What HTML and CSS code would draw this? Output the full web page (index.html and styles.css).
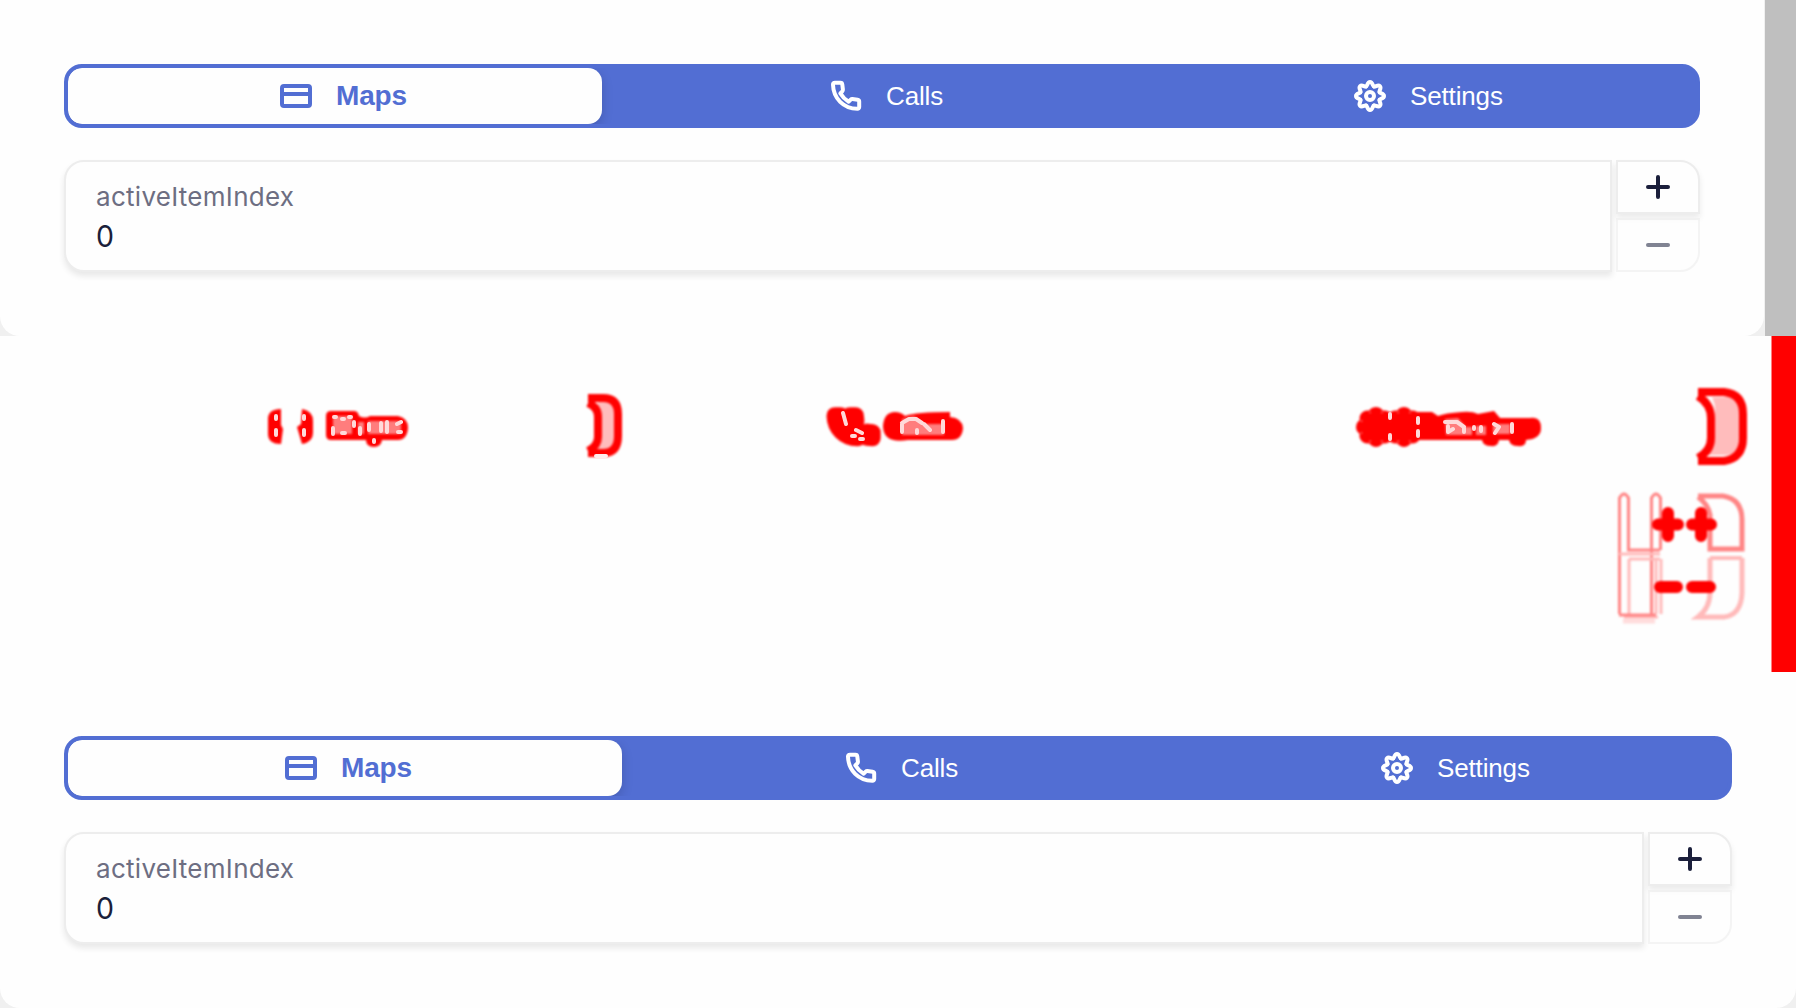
FILE: index.html
```
<!DOCTYPE html>
<html lang="en">
<head>
<meta charset="utf-8">
<title>Tabs comparison</title>
<link rel="stylesheet" href="styles.css">
</head>
<body>
<svg class="defs" width="0" height="0">
  <defs>
    <symbol id="card" viewBox="0 0 32 32"><rect x="2" y="6" width="28" height="20" rx="2"/><path d="M2 14h28"/></symbol>
    <symbol id="phone" viewBox="0 0 32 32"><path id="phone-path" d="M5 2.8h5.5q1.6 0 1.8 1.6l.6 5.2q.1 1-.6 1.7l-2 2C12.3 16.8 15.2 19.7 18.7 21.7l2-2q.7-.7 1.7-.6l5.2.6q1.6.2 1.6 1.8v5.5q0 1.8-1.9 1.7C13.6 28.6 3.4 18.4 3 4.7Q2.9 2.8 5 2.8z"/></symbol>
    <path id="tooth" d="M12.06 6.48C13.6 6 13.2 2 16 2C18.8 2 18.4 6 19.94 6.48"/>
    <g id="gear-shape"><circle cx="16" cy="16" r="4"/><use href="#tooth"/><use href="#tooth" transform="rotate(45 16 16)"/><use href="#tooth" transform="rotate(90 16 16)"/><use href="#tooth" transform="rotate(135 16 16)"/><use href="#tooth" transform="rotate(180 16 16)"/><use href="#tooth" transform="rotate(225 16 16)"/><use href="#tooth" transform="rotate(270 16 16)"/><use href="#tooth" transform="rotate(315 16 16)"/></g>
    <symbol id="gear" viewBox="0 0 32 32"><use href="#gear-shape"/></symbol>
  </defs>
</svg>
<section class="band before">
  <div class="card">
    <nav class="tabs">
      <div class="tab active"><svg class="icon"><use href="#card"/></svg><span>Maps</span></div>
      <div class="tab calls"><svg class="icon"><use href="#phone"/></svg><span>Calls</span></div>
      <div class="tab settings"><svg class="icon"><use href="#gear"/></svg><span>Settings</span></div>
    </nav>
    <div class="control">
      <div class="field"><span class="label">activeItemIndex</span><span class="value">0</span></div>
      <div class="steps">
        <div class="step up"><svg class="sign" viewBox="0 0 24 24"><path d="M12 2v20M2 12h20"/></svg></div>
        <div class="step down"><svg class="sign" viewBox="0 0 24 24"><path d="M2 12h20"/></svg></div>
      </div>
    </div>
  </div>
</section>
<section class="band difference">
  <svg class="marks" viewBox="0 0 1796 336">
    <rect class="solid" x="1771.500" y="0" width="25" height="336"/>
    <g class="soft">
      <path class="solid" d="M281 73Q268 73 268 83V98Q268 108 281 108L283 93L281 89ZM302 73Q313 75 313 85V97Q313 106 302 108L297 91L301 88Z"/>
      <path class="solid" d="M331 75H354Q358 75 359 80Q365 83 370 80H398Q408 82 408 92Q407 104 398 104H382Q381 111 374 111Q366 111 366 104H331Q326 104 326 99V80Q326 75 331 75Z"/>
      <path class="wash" d="M598 65H609Q615 68 615 76V98Q614 112 605 114H598Z"/>
      <path class="line" stroke-width="8" d="M588 67Q598 71 598 81V101Q598 110 588 115M588 62H603Q618 62 618 78V100Q618 117 603 117H588"/>
      <g class="line" stroke-width="13"><use href="#phone-path" x="830" y="75"/><use href="#phone-path" x="845" y="75"/></g>
      <path class="solid" d="M895 76Q901 76 905 80Q916 76 950 76V81Q962 82 963 92Q962 104 952 104H908Q883 108 883 90Q884 76 895 76Z"/>
      <g class="line" stroke-width="12"><use href="#gear-shape" x="1360" y="75"/><use href="#gear-shape" x="1388" y="75"/></g>
      <circle class="solid" cx="1376" cy="91" r="15"/><circle class="solid" cx="1404" cy="91" r="15"/>
      <path class="solid" d="M1415 76H1432L1438 80Q1445 77 1462 76Q1472 75 1478 78L1494 75L1500 82H1530Q1541 80 1541 92Q1541 103 1526 104Q1526 111 1518 110Q1510 110 1509 104H1499Q1498 111 1491 110Q1483 110 1482 104H1415Z"/>
      <path class="blush" d="M333 80H352V98H333ZM358 86H364V98H358ZM368 85H401V98H368ZM902 83L914 80L924 88H944V99H902ZM1445 83L1458 82L1466 91H1472V99H1446ZM1476 90H1486V99H1476ZM1493 88H1510V98H1493Z"/>
      <path class="wash" d="M1712 61Q1715 68 1715 73V97Q1715 109 1707 119H1727Q1739 118 1739 100V77Q1739 61 1725 61Z"/>
      <path class="line" stroke-width="8" d="M1698 60Q1711 68 1711 82V102Q1711 115 1698 122M1698 56H1724Q1743 58 1743 78V102Q1743 122 1724 125H1698"/>
      <g class="pale">
        <path stroke-width="3" d="M1619.500 278V162Q1624 154 1628.500 162V214H1660M1651.500 278V162Q1656 154 1660.500 162V214"/>
        <path class="faint" d="M1619 218H1660M1629 223H1660M1629 223V278M1656 223V278M1661 223V278M1624 281H1658"/>
        <path d="M1619 279H1656"/>
        <path stroke-width="5" d="M1698 160H1723Q1742 163 1742 184V213H1710V179Q1708 168 1698 161"/>
        <path class="faint" stroke-width="5" d="M1742 222V257Q1741 279 1724 281H1698Q1710 272 1710 256V222"/>
        <path class="faint" stroke-width="4" d="M1710 222H1742"/>
        <path class="glow" stroke-width="5" d="M1623 285H1655"/>
      </g>
      <path class="line round" stroke-width="12" d="M1658 188.500H1678M1668 177V200M1692 188.500H1711M1701 177V200M1660 251H1677M1692 251H1710"/>
    </g>
    <path class="flecks" d="M276 80v3M276 94v5M304 80v3M304 94v5M334 81h2M342 83h2M349 81h2M333 92v6M342 97h3M354 86v4M360 92v6M369 88v6M381 87v8M387 86v10M397 88l4-2M398 96h3M374 104v2M843 77l3 11M856 94l6 3M852 100h3M860 103h3M902 87l7-4h7l6 4M902 88v8M917 94v3M924 88l6 6M943 85v11M1390 78v4M1390 99v4M1418 82v5M1418 95v5M1445 86h12l7 5M1448 90v6l5-3M1464 92v4M1474 91v2M1481 91v4M1494 88l5 3-4 6M1512 88v8"/>
    <path class="flecks wide" d="M596 120h10"/>
  </svg>
</section>
<section class="band after">
  <div class="card">
    <nav class="tabs">
      <div class="tab active"><svg class="icon"><use href="#card"/></svg><span>Maps</span></div>
      <div class="tab calls"><svg class="icon"><use href="#phone"/></svg><span>Calls</span></div>
      <div class="tab settings"><svg class="icon"><use href="#gear"/></svg><span>Settings</span></div>
    </nav>
    <div class="control">
      <div class="field"><span class="label">activeItemIndex</span><span class="value">0</span></div>
      <div class="steps">
        <div class="step up"><svg class="sign" viewBox="0 0 24 24"><path d="M12 2v20M2 12h20"/></svg></div>
        <div class="step down"><svg class="sign" viewBox="0 0 24 24"><path d="M2 12h20"/></svg></div>
      </div>
    </div>
  </div>
</section>
</body>
</html>
```
FILE: styles.css
```
* { box-sizing: border-box; }
body { margin: 0; background: #fefefe; font-family: "Liberation Sans", Arial, sans-serif; }
.defs { display: block; }
.band { height: 336px; overflow: hidden; display: flex; }
.before { width: 1796px; background: linear-gradient(90deg, #f0f0f0 1765px, #bfbfbf 1765px); --first: 534px; --second: 568px; --pad1: 212px; --pad2: 228px; --pad3: 184px; }
.after { background: #f0f0f0; --first: 554px; --second: 579px; --pad1: 217px; --pad2: 223px; --pad3: 180px; }
.card { width: 100%; height: 336px; padding: 64px; background: #fefefe; border-radius: 0 0 20px 20px; }
.before .card { width: 1764px; }
.tabs { height: 64px; display: grid; grid-template-columns: var(--first) var(--second) 1fr; border: 4px solid #526ed3; border-radius: 18px; background: #526ed3; overflow: hidden; }
.tab { display: flex; align-items: center; gap: 24px; color: #fff; font-size: 26px; line-height: 56px; letter-spacing: -.15px; white-space: nowrap; }
.active { padding-left: var(--pad1); border-radius: 14px; background: #fefefe; color: #526ed3; font-size: 28px; font-weight: 700; box-shadow: 0 4px 12px rgba(0, 0, 0, .16); }
.calls { padding-left: var(--pad2); }
.settings { padding-left: var(--pad3); }
.icon { flex: none; width: 32px; height: 32px; fill: none; stroke: currentColor; stroke-width: 4; stroke-linecap: round; stroke-linejoin: round; }
.control { display: flex; gap: 4px; height: 112px; margin-top: 32px; }
.field { flex: 1; display: flex; flex-direction: column; padding: 18px 30px; border: 2px solid #ededed; border-radius: 20px 0 0 20px; background: #fefefe; box-shadow: 0 4px 6px rgba(0, 0, 0, .09); font-family: Inter, sans-serif; }
.label { color: #6d6e82; font-size: 26px; line-height: 34px; letter-spacing: .28px; }
.value { color: #1b1f3b; font-size: 30px; line-height: 44px; transform: scaleX(.95); transform-origin: left; }
.steps { width: 84px; display: flex; flex-direction: column; gap: 4px; }
.step { flex: 1; display: flex; align-items: center; justify-content: center; border: 2px solid #ededed; background: #fefefe; }
.up { border-radius: 0 20px 0 0; box-shadow: 0 4px 6px rgba(0, 0, 0, .08); }
.down { border-radius: 0 0 20px 0; opacity: .55; }
.sign { width: 24px; height: 24px; fill: none; stroke: #1b1f3b; stroke-width: 4; stroke-linecap: round; }
.difference { background: #fefefe; }
.marks { display: block; width: 1796px; height: 336px; }
.soft { filter: blur(.9px); }
.solid { fill: #f00; }
.wash { fill: #ffbcbc; }
.blush { fill: #ff7d7d; }
.line { fill: none; stroke: #f00; stroke-linecap: butt; stroke-linejoin: round; }
.round { stroke-linecap: round; }
.pale { fill: none; stroke: #ff8585; stroke-width: 3; }
.faint { stroke: #ffbaba; }
.glow { stroke: #ffdcdc; }
.flecks { fill: none; stroke: #ffd9d9; stroke-width: 4; stroke-linecap: round; stroke-linejoin: round; filter: blur(.4px); }
.wide { stroke: #ffeded; }
```
